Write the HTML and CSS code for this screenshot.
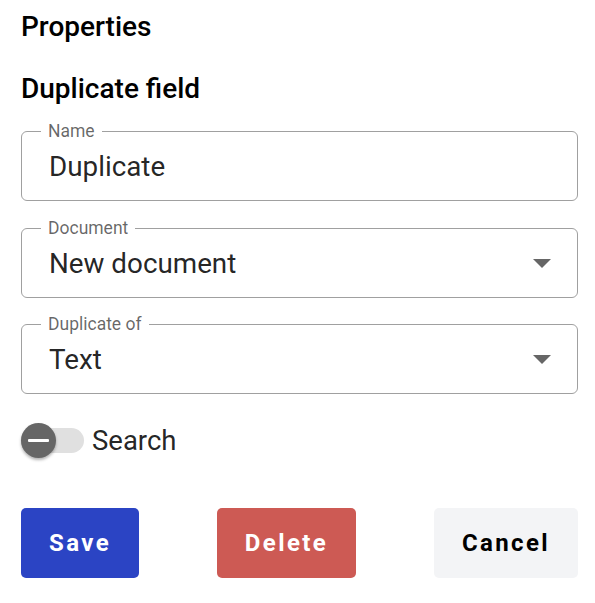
FILE: index.html
```html
<!DOCTYPE html>
<html>
<head>
<meta charset="utf-8">
<link rel="stylesheet" href="styles.css">
</head>
<body>
<div class="panel">
  <h2 class="title">Properties</h2>
  <h3 class="subtitle">Duplicate field</h3>
  <div class="fields">
    <div class="field">
      <span class="label">Name</span>
      <div class="value">Duplicate</div>
    </div>
    <div class="field">
      <span class="label">Document</span>
      <div class="value">New document</div>
      <span class="arrow"></span>
    </div>
    <div class="field">
      <span class="label">Duplicate of</span>
      <div class="value">Text</div>
      <span class="arrow"></span>
    </div>
  </div>
  <div class="switch-row">
    <span class="switch">
      <span class="track"></span>
      <span class="thumb"><span class="minus"></span></span>
    </span>
    <span class="switch-label">Search</span>
  </div>
  <div class="actions">
    <button class="btn save">Save</button>
    <button class="btn delete">Delete</button>
    <button class="btn cancel">Cancel</button>
  </div>
</div>
</body>
</html>
```
FILE: styles.css
```css
* { box-sizing: border-box; }
html, body { margin: 0; padding: 0; background: #fff; }
body { font-family: Roboto, "Liberation Sans", sans-serif; color: rgba(0,0,0,0.87); }
.panel { width: 557px; margin-left: 21px; padding-top: 10px; }
.title { margin: 0; font-size: 28px; font-weight: 500; line-height: 34px; color: #000; }
.subtitle { margin: 28px 0 0; font-size: 28px; font-weight: 500; line-height: 34px; color: #000; }
.fields { display: flex; flex-direction: column; gap: 26.5px; margin-top: 25px; }
.field {
  position: relative;
  height: 70px;
  border: 1px solid #a0a0a0;
  border-radius: 6px;
  padding: 2px 27px 0;
  display: flex;
  align-items: center;
}
.label {
  position: absolute;
  left: 19px;
  top: -11px;
  font-size: 17.5px;
  line-height: 20px;
  color: rgba(0,0,0,0.6);
  padding: 0 7px;
  background: #fff;
}
.value { font-size: 27.8px; line-height: 32px; }
.arrow {
  position: absolute;
  right: 26px;
  top: 30px;
  width: 0; height: 0;
  border-left: 9px solid transparent;
  border-right: 9px solid transparent;
  border-top: 9px solid #666;
}
.switch-row { display: flex; align-items: center; gap: 8px; margin-top: 28px; height: 36px; }
.switch { position: relative; width: 63px; height: 36px; display: inline-block; }
.track { position: absolute; left: 0; top: 6px; width: 63px; height: 25px; border-radius: 13px; background: #e0e0e0; }
.thumb {
  position: absolute; left: 0; top: 1px; width: 35px; height: 35px; border-radius: 50%;
  background: #666; box-shadow: 0 2px 3px rgba(0,0,0,0.3);
  display: flex; align-items: center; justify-content: center;
}
.minus { width: 21px; height: 3px; background: #fff; border-radius: 1px; }
.switch-label { font-size: 27.5px; }
.actions { display: flex; justify-content: space-between; margin-top: 50px; }
.btn {
  height: 70px; border: none; border-radius: 5px;
  font-family: Roboto, "Liberation Sans", sans-serif;
  font-size: 24px; font-weight: 700; letter-spacing: 2.4px;
  padding: 0;
}
.save { background: #2b44c4; color: #fff; width: 118px; }
.delete { background: #cd5a54; color: #fff; width: 139px; }
.cancel { background: #f3f4f6; color: #000; width: 144px; }
```
